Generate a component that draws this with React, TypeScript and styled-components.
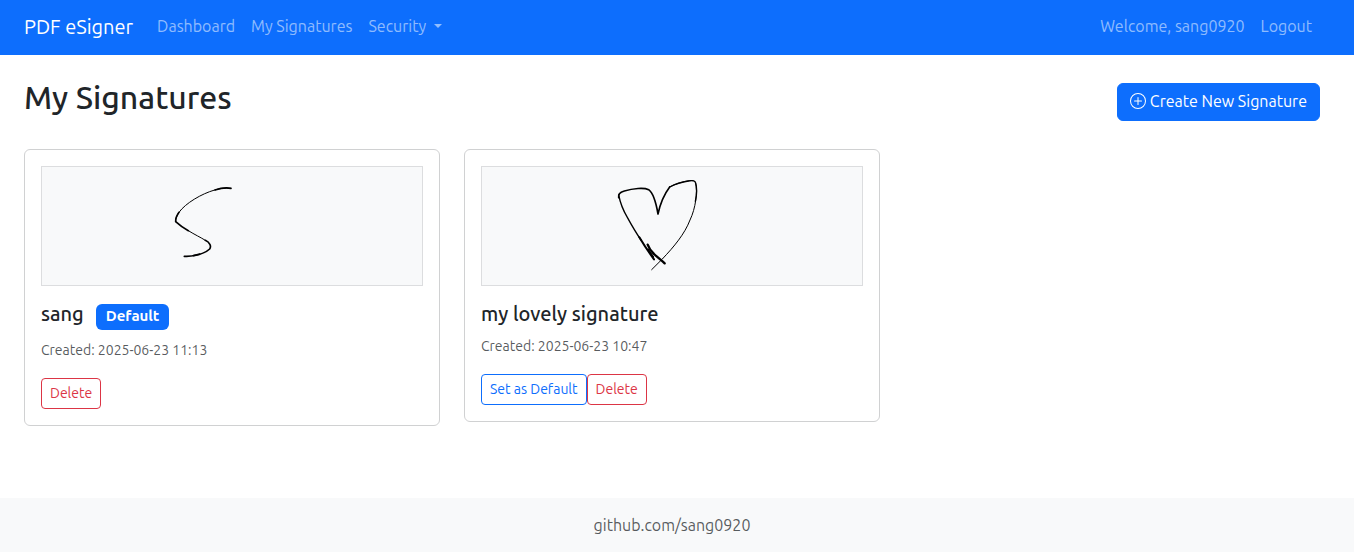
import React from "react";
import styled, { createGlobalStyle, css } from "styled-components";
import { BsPlusCircle } from "react-icons/bs";

const GlobalStyle = createGlobalStyle`
  *, *::before, *::after { box-sizing: border-box; }
  body {
    margin: 0;
    background: #fff;
    color: #212529;
    font-family: Ubuntu, Roboto, "Liberation Sans", sans-serif;
    font-size: 16px;
    line-height: 24px;
  }
  h1, h2, p, ul { margin: 0; padding: 0; font-weight: inherit; }
  button { font-family: inherit; cursor: pointer; }
`;

const Page = styled.div`
  display: flex;
  flex-direction: column;
  min-height: 100vh;
`;

const Navbar = styled.nav`
  display: flex;
  align-items: center;
  padding: 7px 34px 8px 24px;
  background: #0d6efd;
`;

const Brand = styled.a`
  margin-right: 16px;
  color: #fff;
  font-size: 20px;
  line-height: 30px;
  text-decoration: none;
`;

const NavList = styled.ul<{ $end?: boolean }>`
  display: flex;
  list-style: none;
  margin-left: ${(p) => (p.$end ? "auto" : "0")};
`;

const navItem = css`
  display: flex;
  align-items: center;
  padding: 7px 8px 9px;
  border: 0;
  background: none;
  color: rgba(255, 255, 255, 0.55);
  font-size: 16px;
  line-height: 24px;
  text-decoration: none;
`;

const NavLink = styled.a`
  ${navItem}
`;

const NavText = styled.span`
  ${navItem}
`;

const NavToggle = styled.button`
  ${navItem}
  &::after {
    content: "";
    margin-left: 8px;
    border: 4px solid transparent;
    border-top-color: currentColor;
    border-bottom: 0;
  }
`;

const Main = styled.main`
  flex: 1;
  padding: 28px 34px 24px 24px;
`;

const Heading = styled.header`
  display: flex;
  justify-content: space-between;
  align-items: flex-start;
  margin-bottom: 28px;
`;

const Title = styled.h1`
  font-size: 32px;
  line-height: 28px;
  font-weight: 500;
`;

const CreateButton = styled.button`
  display: flex;
  align-items: center;
  gap: 4px;
  padding: 5px 12px 7px;
  border: 1px solid #0d6efd;
  border-radius: 6px;
  background: #0d6efd;
  color: #fff;
  font-size: 16px;
  line-height: 24px;
`;

const CardGrid = styled.section`
  display: grid;
  grid-template-columns: repeat(3, 1fr);
  align-items: start;
  gap: 24px;
`;

const Card = styled.article`
  padding: 16px;
  border: 1px solid #d0d1d2;
  border-radius: 6px;
`;

const Preview = styled.div`
  height: 120px;
  margin-bottom: 16px;
  border: 1px solid #dcdddf;
  background: #f8f9fa;

  svg {
    display: block;
    width: 100%;
    height: 100%;
  }
`;

const CardTitle = styled.h2`
  display: flex;
  align-items: flex-start;
  gap: 12px;
  margin-bottom: 8px;
  font-size: 20px;
  line-height: 24px;
  font-weight: 500;
`;

const Badge = styled.span`
  margin-top: 2px;
  padding: 4px 10px 6px;
  border-radius: 6px;
  background: #0d6efd;
  color: #fff;
  font-size: 15px;
  line-height: 16px;
  font-weight: 700;
`;

const Created = styled.p`
  margin-bottom: 16px;
  color: rgba(33, 37, 41, 0.75);
  font-size: 14px;
  line-height: 24px;
`;

const Actions = styled.div`
  display: flex;
`;

const ActionButton = styled.button<{ $color: string }>`
  padding: 4px 8px;
  border: 1px solid ${(p) => p.$color};
  border-radius: 4px;
  background: transparent;
  color: ${(p) => p.$color};
  font-size: 14px;
  line-height: 21px;
`;

const Footer = styled.footer`
  padding: 15px 34px 15px 24px;
  background: #f8f9fa;
  color: rgba(33, 37, 41, 0.75);
  text-align: center;
`;

const LetterDrawing = () => (
  <svg viewBox="-354 -27 1140 354" role="img" aria-label="Signature sang" fill="none" stroke="#000" strokeLinecap="round" strokeLinejoin="round">
    <path d="M212 37C195 35 180 37 164 42C125 53 76 82 57 109C50 119 47 127 47 137" strokeWidth="3" />
    <path d="M213 37C196 34 180 37 165 42" strokeWidth="5" />
    <path d="M57 109C50 119 46 128 47 137C60 149 70 156 85 164" strokeWidth="5" />
    <path d="M85 164C104 176 122 184 136 193" strokeWidth="3" />
    <path d="M136 193C149 199 155 210 149 219C138 229 119 236 101 239" strokeWidth="5" />
    <path d="M119 234C102 240 87 242 73 241" strokeWidth="5" />
  </svg>
);

const HeartDrawing = () => (
  <svg viewBox="-354 -9 1140 354" role="img" aria-label="Signature heart" fill="none" stroke="#000" strokeLinecap="round" strokeLinejoin="round">
    <path d="M155 299L187 267C222 230 254 192 270 150C287 115 293 66 287 39C284 31 279 31 270 32C249 34 226 42 209 51" strokeWidth="3" />
    <path d="M286 94C292 68 290 48 286 36C282 30 273 32 265 33C244 36 224 43 209 51" strokeWidth="4" />
    <path d="M209 51C191 75 180 104 174 132C169 103 161 70 146 59C132 52 99 55 73 63C57 68 54 75 56 83" strokeWidth="5" />
    <path d="M56 75C61 100 70 122 82 142C94 164 108 188 123 210" strokeWidth="4" />
    <path d="M118 202C134 229 148 249 162 268" strokeWidth="6" />
    <path d="M143 224C147 235 154 245 162 252C172 262 185 271 194 280" strokeWidth="7" />
    <path d="M144 238L160 261" strokeWidth="5" />
  </svg>
);

const signatures = [
  { name: "sang", created: "2025-06-23 11:13", isDefault: true, Drawing: LetterDrawing },
  { name: "my lovely signature", created: "2025-06-23 10:47", isDefault: false, Drawing: HeartDrawing },
];

export default function App() {
  return (
    <Page>
      <GlobalStyle />
      <Navbar>
        <Brand href="#">PDF eSigner</Brand>
        <NavList>
          <li><NavLink href="#dashboard">Dashboard</NavLink></li>
          <li><NavLink href="#signatures">My Signatures</NavLink></li>
          <li><NavToggle type="button" aria-haspopup="menu">Security</NavToggle></li>
        </NavList>
        <NavList $end>
          <li><NavText>Welcome, sang0920</NavText></li>
          <li><NavLink href="#logout">Logout</NavLink></li>
        </NavList>
      </Navbar>
      <Main>
        <Heading>
          <Title>My Signatures</Title>
          <CreateButton type="button">
            <BsPlusCircle size={16} aria-hidden />
            Create New Signature
          </CreateButton>
        </Heading>
        <CardGrid>
          {signatures.map(({ name, created, isDefault, Drawing }) => (
            <Card key={name}>
              <Preview><Drawing /></Preview>
              <CardTitle>
                {name}
                {isDefault && <Badge>Default</Badge>}
              </CardTitle>
              <Created>Created: {created}</Created>
              <Actions>
                {!isDefault && <ActionButton type="button" $color="#0d6efd">Set as Default</ActionButton>}
                <ActionButton type="button" $color="#dc3545">Delete</ActionButton>
              </Actions>
            </Card>
          ))}
        </CardGrid>
      </Main>
      <Footer>github.com/sang0920</Footer>
    </Page>
  );
}
